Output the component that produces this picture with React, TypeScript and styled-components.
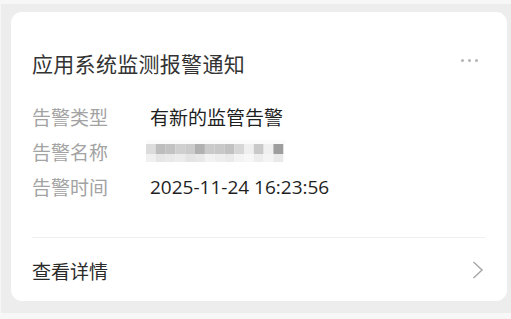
import React from "react";
import styled, { createGlobalStyle } from "styled-components";

const Global = createGlobalStyle`
  html, body { margin: 0; padding: 0; background: #f7f7f7; }
  body { font-family: "Noto Sans CJK SC", "Noto Sans", sans-serif; }
`;

const Frame = styled.div`
  margin: 4px 0 0 1px;
  width: 510px;
  height: 309px;
  box-sizing: border-box;
  background: #ededed;
  padding: 8px 4px 12px 10px;
`;

const Card = styled.div`
  background: #ffffff;
  border-radius: 11px;
  height: 100%;
  box-sizing: border-box;
  padding: 36px 22px 0 21px;
  display: flex;
  flex-direction: column;
`;

const Header = styled.div`
  display: flex;
  align-items: center;
  justify-content: space-between;
  height: 30px;
`;

const Title = styled.div`
  font-size: 21px;
  line-height: 30px;
  color: #333333;
  letter-spacing: 0.3px;
`;

const More = styled.div`
  display: flex;
  gap: 4px;
  margin-right: 7px;
  margin-top: -5px;
`;

const Dot = styled.span`
  width: 3px;
  height: 3px;
  border-radius: 50%;
  background: #b4b4b4;
`;

const Rows = styled.div`
  margin-top: 21px;
  display: flex;
  flex-direction: column;
`;

const Row = styled.div`
  display: grid;
  grid-template-columns: 118px 1fr;
  align-items: center;
  height: 35px;
  font-size: 19px;
`;

const Label = styled.span`
  color: #a3a3a3;
`;

const Value = styled.span`
  color: #1f1f1f;
  font-family: "Open Sans", "Noto Sans CJK SC", sans-serif;
`;

const Divider = styled.div`
  margin-top: 33px;
  height: 1px;
  background: #efefef;
`;

const Footer = styled.div`
  display: flex;
  align-items: center;
  justify-content: space-between;
  height: 30px;
  margin-top: 17px;
`;

const Link = styled.span`
  font-size: 19px;
  color: #2a2a2a;
`;

const Chevron = styled.svg`
  width: 12px;
  height: 18px;
  margin-right: 1px;
`;

const Blur = styled.svg`
  display: block;
  margin-left: -4px;
`;

const top = ["#dcdcdc", "#bdbdbd", "#c2c2c2", "#cfcfcf", "#cbcbcb", "#b0b0b0", "#cacaca", "#c8c8c8", "#c1c1c1", "#d6d6d6", "#efefef", "#c9c9c9", "#f0f0f0", "#9e9e9e"];
const bottom = ["#f0f0f0", "#e6e6e6", "#e9e9e9", "#ececec", "#e4e4e4", "#e8e8e8", "#f2f2f2", "#eeeeee", "#eaeaea", "#f3f3f3", "#f7f7f7", "#ededed", "#f4f4f4", "#e9e9e9"];

const BlurredName = () => (
  <Blur width="140" height="24" viewBox="0 0 140 24">
    {top.map((c, i) => (
      <rect key={"t" + i} x={i * 9.8} y={4} width={9.9} height={10} fill={c} />
    ))}
    {bottom.map((c, i) => (
      <rect key={"b" + i} x={i * 9.8} y={14} width={9.9} height={8} fill={c} />
    ))}
    <rect x={0} y={0} width={140} height={4} fill="#fbfbfb" />
  </Blur>
);

export default function App() {
  return (
    <>
      <Global />
      <Frame>
        <Card>
          <Header>
            <Title>应用系统监测报警通知</Title>
            <More>
              <Dot />
              <Dot />
              <Dot />
            </More>
          </Header>
          <Rows>
            <Row>
              <Label>告警类型</Label>
              <Value>有新的监管告警</Value>
            </Row>
            <Row>
              <Label>告警名称</Label>
              <BlurredName />
            </Row>
            <Row>
              <Label>告警时间</Label>
              <Value>2025-11-24 16:23:56</Value>
            </Row>
          </Rows>
          <Divider />
          <Footer>
            <Link>查看详情</Link>
            <Chevron viewBox="0 0 12 18">
              <path d="M1.5 1 L10 9 L1.5 17" fill="none" stroke="#a8a8a8" strokeWidth="1.5" />
            </Chevron>
          </Footer>
        </Card>
      </Frame>
    </>
  );
}
